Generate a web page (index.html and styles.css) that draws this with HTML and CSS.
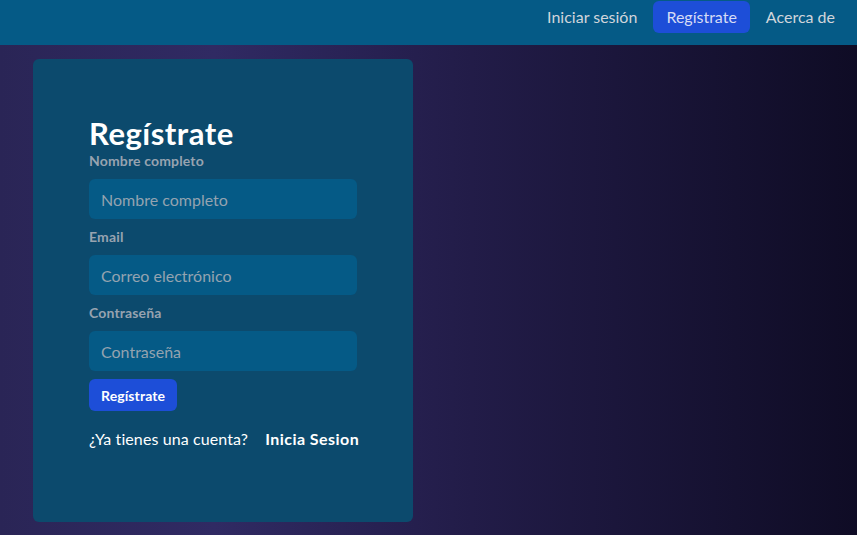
FILE: index.html
```html
<!DOCTYPE html>
<html lang="es">
<head>
<meta charset="utf-8">
<title>Regístrate</title>
<link rel="stylesheet" href="styles.css">
</head>
<body>
<header class="topbar">
  <nav class="nav">
    <a class="nav-link" href="#">Iniciar sesión</a>
    <a class="nav-link active" href="#">Regístrate</a>
    <a class="nav-link" href="#">Acerca de</a>
  </nav>
</header>
<main class="main">
  <section class="card">
    <h1 class="title">Regístrate</h1>
    <form class="form">
      <label class="label" for="nombre">Nombre completo</label>
      <input class="input" id="nombre" type="text" placeholder="Nombre completo">
      <label class="label" for="email">Email</label>
      <input class="input" id="email" type="email" placeholder="Correo electrónico">
      <label class="label" for="pass">Contraseña</label>
      <input class="input" id="pass" type="password" placeholder="Contraseña">
      <button class="btn" type="button">Regístrate</button>
    </form>
    <p class="alt">¿Ya tienes una cuenta? <a class="alt-link" href="#">Inicia Sesion</a></p>
  </section>
</main>
</body>
</html>
```
FILE: styles.css
```css
* { box-sizing: border-box; }
html, body { height: 100%; }
body {
  margin: 0;
  font-family: Lato, "Liberation Sans", sans-serif;
  background: linear-gradient(90deg, #2a2556 0%, #302a63 25%, #221c48 55%, #0f0c25 100%);
  color: #fff;
  overflow: hidden;
}
.topbar {
  height: 45px;
  background: #055a86;
  display: flex;
  justify-content: flex-end;
  padding: 1px 9px 0 0;
}
.nav { display: flex; gap: 3px; align-items: flex-start; }
.nav-link {
  display: block;
  height: 32px;
  line-height: 32px;
  padding: 0 13px;
  color: #d1d5db;
  text-decoration: none;
  font-size: 16px;
  border-radius: 6px;
}
.nav-link.active { background: #1d4ed8; color: #d6dcf5; }
.main { padding: 14px 0 0 33px; }
.card {
  width: 380px;
  height: 463px;
  background: #0c4a6d;
  border-radius: 6px;
  padding: 56px;
}
.title {
  margin: 0;
  font-size: 31px;
  line-height: 36px;
  font-weight: 700;
  letter-spacing: 0.5px;
}
.form { display: flex; flex-direction: column; align-items: flex-start; }
.label {
  font-size: 14px;
  line-height: 20px;
  font-weight: 700;
  color: #97a3b0;
  margin-bottom: 8px;
  letter-spacing: 0.15px;
}
.input {
  width: 268px;
  height: 40px;
  border: 0;
  border-radius: 6px;
  background: #055a86;
  padding: 0 12px;
  font: inherit;
  font-size: 16px;
  color: #fff;
  margin-bottom: 8px;
  outline: none;
}
.input::placeholder { color: #94a3b0; }
.btn {
  height: 32px;
  padding: 0 12px;
  border: 0;
  border-radius: 6px;
  background: #1d4ed8;
  color: #fff;
  font: inherit;
  font-size: 14px;
  font-weight: 700;
  letter-spacing: 0.1px;
}
.alt {
  margin: 16px 0 0;
  font-size: 16px;
  line-height: 24px;
  color: #fff;
  letter-spacing: 0.1px;
  white-space: nowrap;
}
.alt-link {
  color: #fff;
  font-weight: 700;
  text-decoration: none;
  margin-left: 13px;
  letter-spacing: 0.45px;
}
```
